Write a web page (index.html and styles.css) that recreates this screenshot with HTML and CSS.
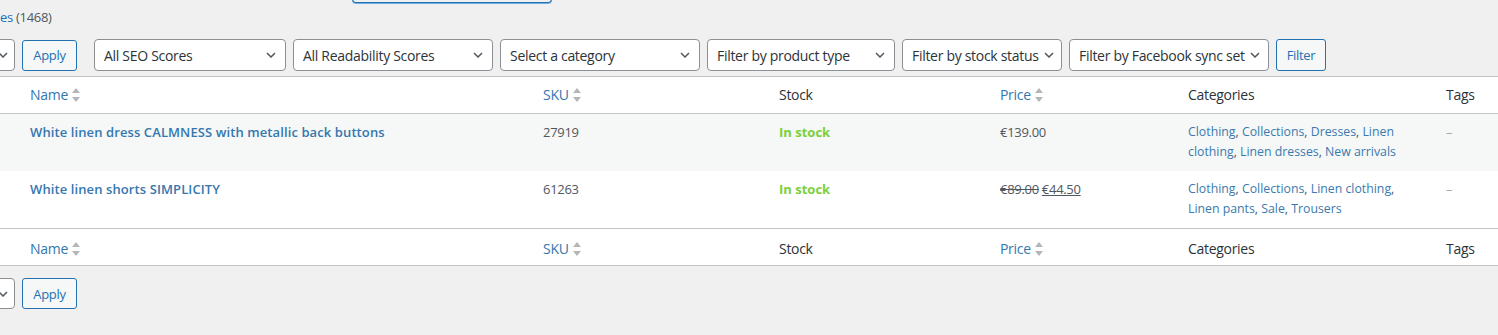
FILE: index.html
```html
<!DOCTYPE html>
<html>
	<head>
		<meta charset="UTF-8">
		<title>Products</title>
		<link rel="stylesheet" href="styles.css">
	</head>
	<body>
		<div class="wrap">
			<div class="topline">
				<p class="subsub"><a href="#">es</a> <span class="count">(1468)</span></p>
				<div class="searchbox"></div>
			</div>

			<div class="tablenav">
				<div class="select bulk"><span></span><svg class="chev" viewBox="0 0 10 6"><path d="M1 1l4 4 4-4"/></svg></div>
				<button class="button apply">Apply</button>
				<div class="filters">
					<div class="select w192"><span>All SEO Scores</span><svg class="chev" viewBox="0 0 10 6"><path d="M1 1l4 4 4-4"/></svg></div>
					<div class="select w200"><span>All Readability Scores</span><svg class="chev" viewBox="0 0 10 6"><path d="M1 1l4 4 4-4"/></svg></div>
					<div class="select w200"><span>Select a category</span><svg class="chev" viewBox="0 0 10 6"><path d="M1 1l4 4 4-4"/></svg></div>
					<div class="select w188"><span>Filter by product type</span><svg class="chev" viewBox="0 0 10 6"><path d="M1 1l4 4 4-4"/></svg></div>
					<div class="select w160 tight"><span>Filter by stock status</span><svg class="chev" viewBox="0 0 10 6"><path d="M1 1l4 4 4-4"/></svg></div>
					<div class="select w200 tight"><span>Filter by Facebook sync set</span><svg class="chev" viewBox="0 0 10 6"><path d="M1 1l4 4 4-4"/></svg></div>
					<button class="button filter">Filter</button>
				</div>
			</div>

			<table class="list">
				<colgroup>
					<col class="c-name">
					<col class="c-sku">
					<col class="c-stock">
					<col class="c-price">
					<col class="c-cat">
					<col>
				</colgroup>
				<thead>
					<tr>
						<th class="name"><a href="#">Name <svg class="sort" viewBox="0 0 8 14"><path d="M4 0l4 5H0z M0 9h8l-4 5z"/></svg></a></th>
						<th><a href="#">SKU <svg class="sort" viewBox="0 0 8 14"><path d="M4 0l4 5H0z M0 9h8l-4 5z"/></svg></a></th>
						<th>Stock</th>
						<th><a href="#">Price <svg class="sort" viewBox="0 0 8 14"><path d="M4 0l4 5H0z M0 9h8l-4 5z"/></svg></a></th>
						<th>Categories</th>
						<th>Tags</th>
					</tr>
				</thead>
				<tbody>
					<tr class="alt">
						<td class="name"><a class="title" href="#">White linen dress CALMNESS with metallic back buttons</a></td>
						<td>27919</td>
						<td><mark class="instock">In stock</mark></td>
						<td>€139.00</td>
						<td class="cats"><a href="#">Clothing</a>, <a href="#">Collections</a>, <a href="#">Dresses</a>, <a href="#">Linen clothing</a>, <a href="#">Linen dresses</a>, <a href="#">New arrivals</a></td>
						<td class="dash">–</td>
					</tr>
					<tr>
						<td class="name"><a class="title" href="#">White linen shorts SIMPLICITY</a></td>
						<td>61263</td>
						<td><mark class="instock">In stock</mark></td>
						<td><del>€89.00</del> <ins>€44.50</ins></td>
						<td class="cats"><a href="#">Clothing</a>, <a href="#">Collections</a>, <a href="#">Linen clothing</a>, <a href="#">Linen pants</a>, <a href="#">Sale</a>, <a href="#">Trousers</a></td>
						<td class="dash">–</td>
					</tr>
				</tbody>
				<tfoot>
					<tr>
						<th class="name"><a href="#">Name <svg class="sort" viewBox="0 0 8 14"><path d="M4 0l4 5H0z M0 9h8l-4 5z"/></svg></a></th>
						<th><a href="#">SKU <svg class="sort" viewBox="0 0 8 14"><path d="M4 0l4 5H0z M0 9h8l-4 5z"/></svg></a></th>
						<th>Stock</th>
						<th><a href="#">Price <svg class="sort" viewBox="0 0 8 14"><path d="M4 0l4 5H0z M0 9h8l-4 5z"/></svg></a></th>
						<th>Categories</th>
						<th>Tags</th>
					</tr>
				</tfoot>
			</table>

			<div class="tablenav bottom">
				<div class="select bulk"><span></span><svg class="chev" viewBox="0 0 10 6"><path d="M1 1l4 4 4-4"/></svg></div>
				<button class="button apply">Apply</button>
			</div>
		</div>
	</body>
</html>
```
FILE: styles.css
```css
html, body{
	margin: 0;
	padding: 0;
	background: #f0f0f1;
}
body{
	font-family: "Open Sans", "Noto Sans", sans-serif;
	font-size: 13px;
	letter-spacing: -0.3px;
	color: #3c434a;
	overflow: hidden;
}
a{
	color: #3477af;
	text-decoration: none;
}
.wrap{
	width: 1498px;
}
.topline{
	display: flex;
	height: 30px;
}
.subsub{
	margin: 7px 0 0;
	font-size: 13px;
	line-height: 20px;
	width: 352px;
}
.subsub a{
	color: #2271b1;
}
.count{
	color: #50575e;
}
.searchbox{
	width: 198px;
	height: 12px;
	margin-top: -10px;
	border: 1px solid #2271b1;
	border-top: none;
	border-radius: 0 0 4px 4px;
	box-shadow: 0 1px 0 #72aee6;
}
.tablenav{
	display: flex;
	align-items: center;
	height: 32px;
	margin-top: 9px;
	margin-bottom: 5px;
}
.tablenav.bottom{
	margin-top: 12px;
	height: 31px;
}
.select{
	box-sizing: border-box;
	flex: none;
	display: flex;
	align-items: center;
	justify-content: space-between;
	height: 32px;
	padding: 0 9px 0 9px;
	background: #fff;
	border: 1px solid #8c8f94;
	border-radius: 4px;
	font-size: 14px;
	color: #2c3338;
	white-space: nowrap;
	overflow: hidden;
}
.select.tight{
	justify-content: flex-start;
	gap: 5px;
}
.bottom .select{
	height: 31px;
}
.chev{
	width: 10px;
	height: 6px;
	flex: none;
	fill: none;
	stroke: #50575e;
	stroke-width: 1.5;
}
.bulk{
	width: 121px;
	margin-left: -106px;
	padding: 0 6px 0 4px;
}
.button{
	box-sizing: border-box;
	flex: none;
	height: 31px;
	padding: 0;
	font-family: inherit;
	font-size: 13px;
	letter-spacing: -0.3px;
	color: #2271b1;
	background: #f6f7f7;
	border: 1px solid #2271b1;
	border-radius: 3px;
}
.apply{
	width: 55px;
	margin-left: 7px;
}
.filters{
	display: flex;
	align-items: center;
	gap: 7px;
	margin-left: 17px;
}
.filter{
	height: 32px;
	width: 50px;
}
.w192{ width: 192px; }
.w200{ width: 200px; }
.w188{ width: 188px; }
.w160{ width: 160px; }
.list{
	width: 1498px;
	table-layout: fixed;
	border-collapse: collapse;
	background: #fff;
	border-top: 1px solid #c3c4c7;
	border-bottom: 1px solid #c3c4c7;
}
.c-name{ width: 533px; }
.c-sku{ width: 236px; }
.c-stock{ width: 221px; }
.c-price{ width: 188px; }
.c-cat{ width: 258px; }
th{
	text-align: left;
	font-weight: 400;
	font-size: 14px;
	color: #2c3338;
	line-height: 20px;
	padding: 8px 10px 8px;
	height: 20px;
}
thead th{
	border-bottom: 1px solid #c3c4c7;
}
tfoot th{
	border-top: 1px solid #c3c4c7;
	padding-top: 10px;
	padding-bottom: 6px;
}
th a{
	color: #3477af;
}
th.name, td.name{
	padding-left: 30px;
}
.sort{
	width: 8px;
	height: 14px;
	fill: #b4b6b9;
	vertical-align: -2px;
	margin-left: 1px;
}
td{
	vertical-align: top;
	padding: 8px 10px 9px;
	font-size: 13px;
	line-height: 20px;
	color: #50575e;
	height: 40px;
}
tr.alt td{
	background: #f6f7f7;
}
a.title{
	font-weight: 600;
	font-size: 13px;
	letter-spacing: 0.1px;
	color: #3477af;
}
mark.instock{
	background: none;
	color: #7ad03a;
	font-weight: 700;
	letter-spacing: 0;
}
del{
	color: #50575e;
}
ins{
	text-decoration: underline;
	color: #50575e;
}
td.cats{
	font-size: 12.3px;
	letter-spacing: 0;
}
td a{
	color: #3a7aae;
}
td.dash{
	color: #a7aaad;
}
```
